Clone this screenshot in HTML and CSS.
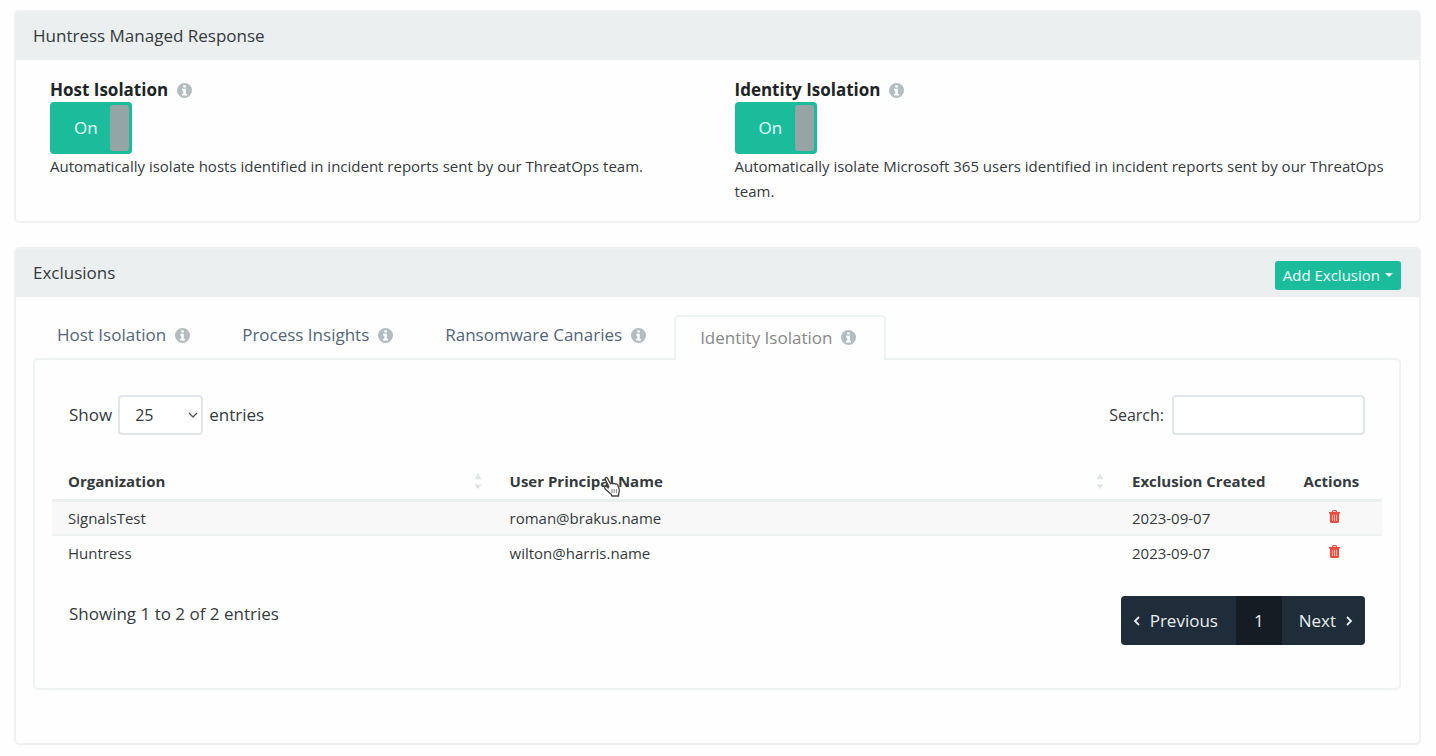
FILE: index.html
```html
<!DOCTYPE html>
<html lang="en">
<head>
<meta charset="utf-8">
<title>Huntress Managed Response</title>
<link rel="stylesheet" href="styles.css">
</head>
<body>
<svg class="sprite" aria-hidden="true">
  <symbol id="info" viewBox="0 0 16 16"><circle cx="8" cy="8" r="8" fill="currentColor"/><path fill="#fff" d="M6.7 2.4h2.7v2.3H6.7zM5.4 6.1h4v5.3h1.3v1.9H5.4v-1.9h1.3V8H5.4z"/></symbol>
  <symbol id="trash" viewBox="0 0 12 14"><path fill="currentColor" fill-rule="evenodd" d="M4 0h4l1 2h3v1.6h-1V12.500a1.500 1.500 0 0 1-1.500 1.500h-7A1.500 1.500 0 0 1 1 12.500V3.600H0V2h3zM4.600 1.200 4.200 2h3.600l-.4-.8z"/><path d="M3.700 5v7M6 5v7M8.300 5v7" stroke="#fbb9b1" stroke-width="1.100"/></symbol>
  <symbol id="sort" viewBox="0 0 8 18"><path fill="currentColor" d="M4 0l4 7H0zM0 13h8l-4 5z"/></symbol>
</svg>
<main class="page">
  <section class="panel">
    <header class="panel-header"><h2 class="panel-title">Huntress Managed Response</h2></header>
    <div class="responses">
      <div class="response">
        <div class="response-title"><label for="host">Host Isolation</label><svg class="info"><use href="#info"/></svg></div>
        <label class="toggle"><input class="toggle-input" type="checkbox" id="host" checked><span class="toggle-text">On</span><span class="toggle-handle"></span></label>
        <p class="response-text">Automatically isolate hosts identified in incident reports sent by our ThreatOps team.</p>
      </div>
      <div class="response">
        <div class="response-title"><label for="identity">Identity Isolation</label><svg class="info"><use href="#info"/></svg></div>
        <label class="toggle"><input class="toggle-input" type="checkbox" id="identity" checked><span class="toggle-text">On</span><span class="toggle-handle"></span></label>
        <p class="response-text">Automatically isolate Microsoft 365 users identified in incident reports sent by our ThreatOps team.</p>
      </div>
    </div>
  </section>

  <section class="panel">
    <header class="panel-header"><h2 class="panel-title">Exclusions</h2><button class="add" type="button">Add Exclusion<span class="caret"></span></button></header>
    <div class="exclusions">
      <nav class="tabs">
        <a class="tab" href="#host-isolation">Host Isolation<svg class="info"><use href="#info"/></svg></a>
        <a class="tab" href="#process">Process Insights<svg class="info"><use href="#info"/></svg></a>
        <a class="tab" href="#canaries">Ransomware Canaries<svg class="info"><use href="#info"/></svg></a>
        <a class="tab tab-active" href="#identity-isolation" aria-current="page">Identity Isolation<svg class="info"><use href="#info"/></svg></a>
      </nav>
      <div class="tab-content">
        <div class="tools">
          <div class="length"><label for="length">Show</label>
            <span class="select-wrap"><select class="field select" id="length"><option>25</option><option>50</option><option>100</option></select><svg class="chevron" viewBox="0 0 10 6"><path d="M1 1l4 4 4-4"/></svg></span>
            <span>entries</span></div>
          <div class="search"><label for="search">Search:</label><input class="field search-input" type="search" id="search"></div>
        </div>
        <table class="table">
          <colgroup><col class="col-org"><col class="col-name"><col class="col-date"><col class="col-actions"></colgroup>
          <thead><tr>
            <th><div class="heading">Organization<svg class="sort"><use href="#sort"/></svg></div></th>
            <th><div class="heading"><span class="hovered">User Principal Name<svg class="pointer" viewBox="0 0 20 22"><path fill="#fff" stroke="#444" stroke-width="1.300" stroke-linejoin="round" d="M6 11 2.300 3.400C1.600 1.800 3.600.8 4.500 2.300L7.400 7.800c.6-1 2-1 2.600.1.800-.9 2.100-.7 2.500.3.900-.6 2.200-.2 2.400.8l1.300 4.400c.5 1.800-.4 2.900-.5 4.600l-.2 2H8.800l-.3-1.600L3.200 14c-1.300-1.500-2.300-2.600-1.700-3.300.9-1 2.500-.3 4.500 1.600"/><path stroke="#888" d="M9 13v4M11.200 13v4M13.400 13v4"/></svg></span><svg class="sort"><use href="#sort"/></svg></div></th>
            <th>Exclusion Created</th><th>Actions</th>
          </tr></thead>
          <tbody>
            <tr><td>SignalsTest</td><td>roman@brakus.name</td><td>2023-09-07</td><td class="action"><button class="delete" type="button" aria-label="Delete SignalsTest exclusion"><svg class="trash"><use href="#trash"/></svg></button></td></tr>
            <tr><td>Huntress</td><td>wilton@harris.name</td><td>2023-09-07</td><td class="action"><button class="delete" type="button" aria-label="Delete Huntress exclusion"><svg class="trash"><use href="#trash"/></svg></button></td></tr>
          </tbody>
        </table>
        <div class="footer">
          <p class="summary">Showing 1 to 2 of 2 entries</p>
          <nav class="pager" aria-label="Pages">
            <a class="page-link" href="#previous"><svg class="arrow" viewBox="0 0 8 10"><path d="M6 1 2 5l4 4"/></svg>Previous</a>
            <a class="page-link page-current" href="#1">1</a>
            <a class="page-link" href="#next">Next<svg class="arrow" viewBox="0 0 8 10"><path d="M2 1l4 4-4 4"/></svg></a>
          </nav>
        </div>
      </div>
    </div>
  </section>
</main>
</body>
</html>
```

FILE: styles.css
```css
* { box-sizing: border-box; }
body { margin: 0; background: #fefefe; color: #343a3d; font: 17px/24px "Open Sans", sans-serif; }
h2, p { margin: 0; }
svg { flex: none; }
.sprite { display: none; }
.page { display: flex; flex-direction: column; gap: 24px; padding: 10px 15px 12px 14px; }
.panel { border: 2px solid #f0f2f2; border-radius: 5px; background: #fefefe; }
.panel-header { display: flex; justify-content: space-between; min-height: 48px; padding: 12px 18px 0 17px; background: #ebeff0; }
.panel-title { font-size: 17px; font-weight: 400; }
.info { width: 15px; height: 15px; color: #b3bdc1; }

.responses { display: grid; grid-template-columns: 1fr 1fr; padding: 18px 17px 17px; }
.response { padding: 0 17px; }
.response-title { display: flex; align-items: center; gap: 9px; color: #202425; font-weight: 700; }
.toggle { position: relative; display: flex; align-items: center; justify-content: space-between; width: 82px; height: 52px; padding: 3px 3px 3px 24px; border-radius: 4px; background: #1abc9c; color: #e6fff8; }
.toggle-input { position: absolute; inset: 0; width: 100%; height: 100%; margin: 0; opacity: 0; cursor: pointer; }
.toggle-handle { width: 19px; height: 46px; border-radius: 3px; background: #95a5a6; }
.response-text { font-size: 15px; line-height: 25px; }

.add { display: flex; align-items: center; gap: 5px; height: 29px; padding: 0 8px 2px; border: 0; border-radius: 3px; background: #1abc9c; color: #f0fffb; font: 15px/24px "Open Sans", sans-serif; }
.caret { border: 4px solid transparent; border-top-color: currentColor; border-bottom: 0; }

.exclusions { padding: 18px 18px 53px 17px; }
.tabs { display: flex; align-items: flex-start; }
.tab { display: flex; align-items: center; gap: 9px; height: 40px; padding: 0 26px; color: #52667a; text-decoration: none; }
.tab:first-child { padding-left: 24px; }
.tab-active { position: relative; height: 45px; margin: 0 2px -2px; padding: 0 28px 2px 24px; border: 2px solid #eff2f2; border-bottom: 0; border-radius: 5px 5px 0 0; background: #fefefe; color: #86898a; }
.tab-content { padding: 35px 17px 43px; border: 2px solid #eff2f2; border-radius: 5px; }
.tools { display: flex; justify-content: space-between; padding: 0 17px; }
.length, .search { display: flex; align-items: center; gap: 6px; }
.search { gap: 8px; font-size: 16px; }
.field { height: 40px; border: 2px solid #dfe7e9; border-radius: 4px; background: #fff; color: #343a3d; font: 16px/24px "Open Sans", sans-serif; }
.select-wrap { position: relative; }
.select { width: 85px; padding: 0 15px; appearance: none; }
.chevron { position: absolute; right: 5px; top: 17px; width: 10px; height: 6px; fill: none; stroke: #555; stroke-width: 1.3; pointer-events: none; }
.search-input { width: 193px; padding: 0 12px; }

.table { width: 100%; margin-top: 28px; border-collapse: collapse; table-layout: fixed; font-size: 15px; }
.col-org { width: 33.2%; }
.col-name { width: 46.8%; }
.col-date { width: 12.9%; }
.col-actions { width: 7.1%; }
th { height: 37px; padding: 0 0 0 16px; border-bottom: 3px solid #ebeff0; text-align: left; font-weight: 700; white-space: nowrap; }
td { height: 35px; padding: 0 0 0 16px; }
tbody tr:first-child { background: #f8f8f8; }
tbody tr + tr td { border-top: 2px solid #eff2f2; }
.heading { display: flex; align-items: center; justify-content: space-between; padding-right: 12px; }
.sort { width: 8px; height: 16px; color: #e2e5e6; }
.hovered { position: relative; }
.pointer { position: absolute; left: 93px; top: 7px; width: 20px; height: 22px; fill: none; }
.action { padding: 0; text-align: center; }
.delete { display: inline-flex; padding: 0 0 8px; border: 0; background: none; color: #e74c3c; }
.trash { width: 11px; height: 13px; }

.footer { display: flex; justify-content: space-between; padding: 26px 17px 0; }
.summary { padding-top: 6px; }
.pager { display: flex; height: 49px; overflow: hidden; border-radius: 4px; background: #1f2d3a; }
.page-link { display: flex; align-items: center; gap: 9px; padding: 0 12px 0 17px; color: #e8edf0; text-decoration: none; }
.page-link:first-child { padding: 0 18px 0 12px; }
.page-current { padding: 0 18px; background: #151c23; }
.arrow { width: 8px; height: 10px; fill: none; stroke: currentColor; stroke-width: 1.8; }
```
